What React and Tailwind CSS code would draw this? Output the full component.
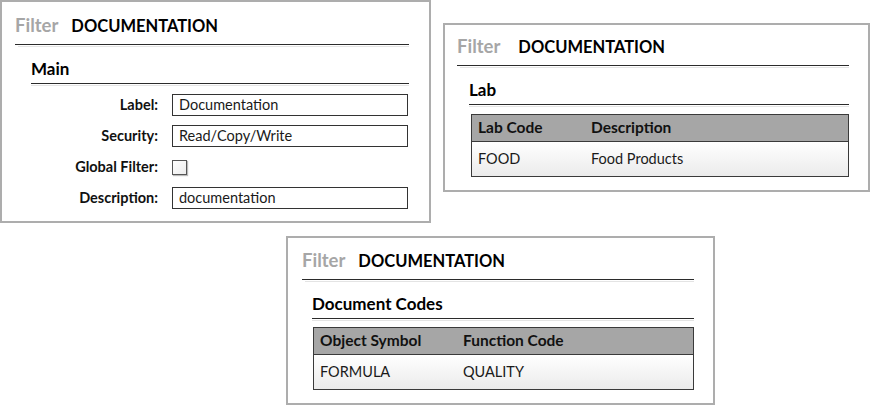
import React from "react";

const font = { fontFamily: 'Lato, "Open Sans", "Liberation Sans", sans-serif' };

// header "Filter DOCUMENTATION" + double rule
const PanelHeader = ({ gap }) => (
  <div>
    <div className={`h-[43px] pt-[14px] flex items-baseline border-b border-[#2b2b2b] ${gap}`}>
      <span className="text-[18.5px] font-bold text-[#a6a6a6] leading-none">Filter</span>
      <span className="text-[16.5px] font-bold text-black leading-none">DOCUMENTATION</span>
    </div>
    <div className="h-px mt-px ml-[3px] bg-[#e4e4e4]" />
  </div>
);

const SectionHeader = ({ title }) => (
  <div>
    <div className="h-[37px] pt-[7px] flex items-center border-b border-[#2b2b2b]">
      <span className="text-[17px] font-bold text-black leading-none">{title}</span>
    </div>
    <div className="h-px mt-px bg-[#e4e4e4]" />
  </div>
);

const Field = ({ label, children }) => (
  <>
    <div className="h-[22px] flex items-center justify-end text-[14.5px] font-bold text-[#111]">{label}</div>
    <div className="h-[22px] flex items-center">{children}</div>
  </>
);

const TextBox = ({ value }) => (
  <div className="h-[22px] w-[236px] border border-[#333] flex items-center px-[6px] text-[14.5px] text-[#1a1a1a] bg-white">
    {value}
  </div>
);

const DataTable = ({ cols, row, split }) => (
  <div className="border border-[#3a3a3a]">
    <div className="h-[27px] bg-[#a6a6a6] border-b border-[#3a3a3a] flex items-center text-[15.5px] font-bold text-[#111]">
      <div className={`pl-[6px] ${split}`}>{cols[0]}</div>
      <div>{cols[1]}</div>
    </div>
    <div className="h-[34px] bg-gradient-to-b from-white to-[#ebebeb] flex items-center text-[14.5px] text-[#1a1a1a]">
      <div className={`pl-[6px] ${split}`}>{row[0]}</div>
      <div>{row[1]}</div>
    </div>
  </div>
);

export default function App() {
  return (
    <div className="relative w-[873px] h-[406px] bg-white overflow-hidden" style={font}>
      {/* Main window */}
      <div className="absolute left-0 top-0 w-[431px] h-[223px] border-2 border-[#adadad] bg-white pl-[13px] pr-[20px]">
        <PanelHeader gap="gap-[13px]" />
        <div className="ml-[16px]">
          <SectionHeader title="Main" />
          <div className="mt-[8px] grid grid-cols-[127px_1fr] gap-x-[14px] gap-y-[9px]">
            <Field label="Label:"><TextBox value="Documentation" /></Field>
            <Field label="Security:"><TextBox value="Read/Copy/Write" /></Field>
            <Field label="Global Filter:">
              <div className="w-[15px] h-[15px] border border-[#555] bg-gradient-to-br from-white to-[#ececec] shadow-[1px_1px_1px_#bbb]" />
            </Field>
            <Field label="Description:"><TextBox value="documentation" /></Field>
          </div>
        </div>
      </div>

      {/* Lab window */}
      <div className="absolute left-[443px] top-[23px] w-[427px] h-[169px] border-2 border-[#adadad] bg-white pl-[12px] pr-[19px]">
        <div className="-mt-[2px]">
          <PanelHeader gap="gap-[18px]" />
        </div>
        <div className="ml-[12px]">
          <SectionHeader title="Lab" />
          <div className="mt-[7px] ml-[2px]">
            <DataTable cols={["Lab Code", "Description"]} row={["FOOD", "Food Products"]} split="w-[119px]" />
          </div>
        </div>
      </div>

      {/* Document codes window */}
      <div className="absolute left-[286px] top-[236px] w-[429px] h-[169px] border-2 border-[#adadad] bg-white pl-[14px] pr-[19px]">
        <div className="-mt-[1px]">
          <PanelHeader gap="gap-[13px]" />
        </div>
        <div className="ml-[10px]">
          <SectionHeader title="Document Codes" />
          <div className="mt-[6px] ml-[1px]">
            <DataTable cols={["Object Symbol", "Function Code"]} row={["FORMULA", "QUALITY"]} split="w-[149px]" />
          </div>
        </div>
      </div>
    </div>
  );
}
